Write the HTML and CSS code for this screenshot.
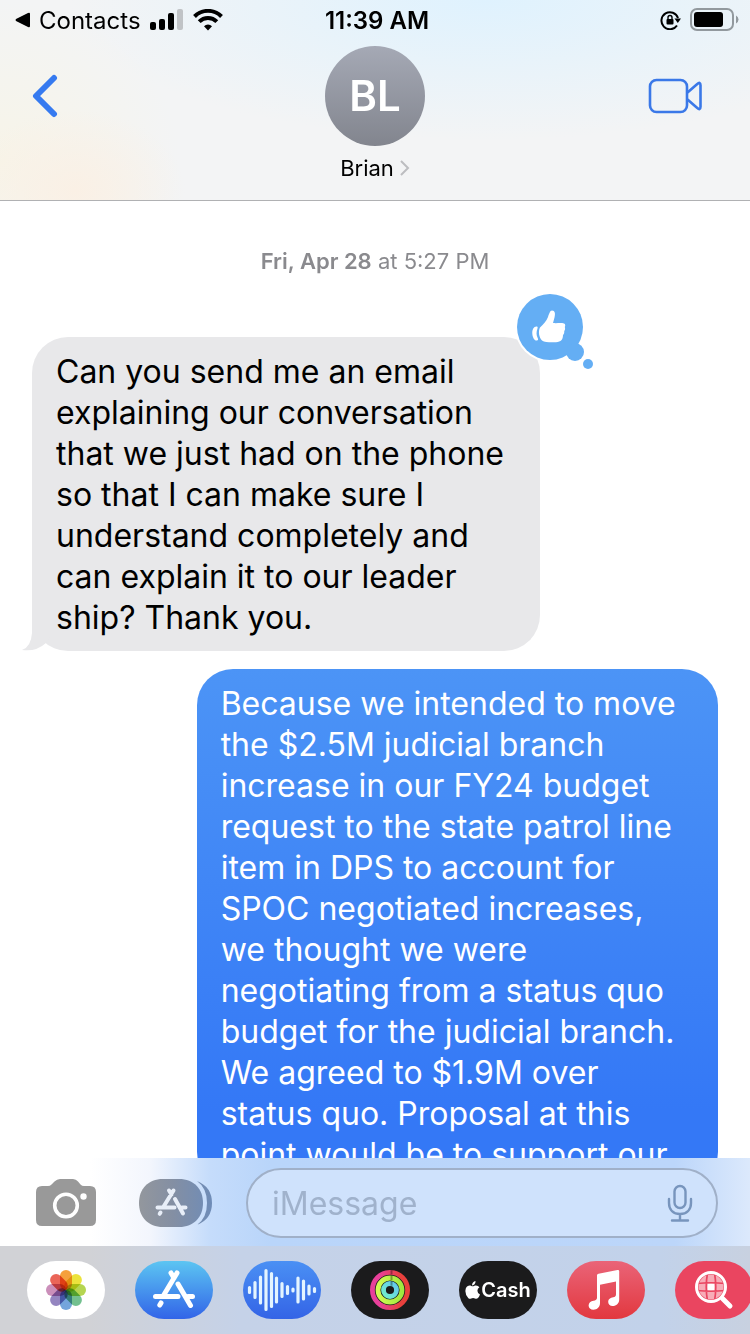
FILE: index.html
```html
<!DOCTYPE html>
<html lang="en">

<head>
  <meta charset="UTF-8">
  <meta name="viewport" content="width=device-width, initial-scale=1.0">
  <title>Messages</title>
  <link rel="stylesheet" href="styles.css">
</head>

<body>
  <header class="header">
    <div class="status">
      <div class="status-left">
        <a class="back-app" href="#contacts">
          <svg width="15" height="16" viewBox="0 0 15 16"><path d="M1 7 13 1q2-1 2 1v12q0 2-2 1L1 9q-1-1 0-2z"/></svg>
          Contacts
        </a>
        <svg width="34" height="22" viewBox="0 0 34 22">
          <rect x="0" y="13" width="6" height="8" rx="2"/>
          <rect x="9" y="10" width="6" height="11" rx="2"/>
          <rect x="18" y="4" width="6" height="17" rx="2"/>
          <rect x="27" y="0" width="6" height="21" rx="2" fill="#c0c3c6"/>
        </svg>
        <svg width="30" height="22" viewBox="0 0 30 22" fill="none" stroke="#000" stroke-width="4">
          <path d="M1.500 7.500a19 19 0 0 1 27 0"/>
          <path d="M6.200 12.600a12.400 12.400 0 0 1 17.600 0"/>
          <path d="M15 21.500l-4-4.300a5.800 5.800 0 0 1 8 0z" fill="#000" stroke="none"/>
        </svg>
      </div>
      <time class="status-time">11:39 AM</time>
      <div class="status-right">
        <svg width="22" height="20" viewBox="0 0 22 20" fill="none" stroke="#000" stroke-width="2">
          <path d="M17 15.500A8.500 8.500 0 1 1 18 8"/>
          <path d="M14.500 8.500H21l-3.200 4.500z" fill="#000" stroke="none"/>
          <rect x="6.500" y="9" width="7" height="5.500" rx="1" fill="#000" stroke="none"/>
          <path d="M8 9.500V7.500a2 2 0 0 1 4 0v2" stroke-width="1.400"/>
        </svg>
        <svg width="49" height="24" viewBox="0 0 49 24">
          <rect x="1" y="1" width="42" height="21" rx="6" fill="none" stroke="#92999e" stroke-width="2"/>
          <rect x="4" y="4" width="29" height="15" rx="3"/>
          <path d="M46 7.500q2.500 1.500 2.500 4t-2.500 4z" fill="#92999e"/>
        </svg>
      </div>
    </div>
    <nav class="nav">
      <button class="nav-btn" type="button" aria-label="Back">
        <svg width="26" height="44" viewBox="0 0 26 44" fill="none" stroke="#367af0" stroke-width="6" stroke-linecap="round" stroke-linejoin="round"><path d="M22 4 4 22l18 18"/></svg>
      </button>
      <a class="contact" href="#brian">
        <span class="avatar">BL</span>
        <span class="contact-name">Brian
          <svg width="10" height="16" viewBox="0 0 10 16" fill="none" stroke="#bcbdc0" stroke-width="2"><path d="m1 1 7 7-7 7"/></svg>
        </span>
      </a>
      <button class="nav-btn nav-video" type="button" aria-label="FaceTime">
        <svg width="54" height="36" viewBox="0 0 54 36" fill="none" stroke="#3a78e8" stroke-width="2.600" stroke-linejoin="round">
          <rect x="2" y="2" width="37" height="32" rx="6.500"/>
          <path d="M39.500 14.500 49 6.200q3.500-3 3.500 1v21.600q0 4-3.500 1l-9.500-8.300"/>
        </svg>
      </button>
    </nav>
  </header>

  <main class="messages">
    <p class="date"><strong>Fri, Apr 28</strong> at 5:27 PM</p>
    <div class="bubble received">
      Can you send me an email explaining our conversation that we just had on the phone so that I can make sure I understand completely and can explain it to our leader ship? Thank you.
      <svg class="tail" width="28" height="40" viewBox="0 0 28 40"><path d="M10 0v22Q9 36 0 39q14 2 24-7l4-6V0z" fill="#e8e8ea"/></svg>
      <svg class="reaction" width="80" height="80" viewBox="0 0 80 80" role="img" aria-label="Liked">
        <circle cx="35" cy="35" r="35" fill="#fff"/>
        <g fill="#64aef4">
          <circle cx="35" cy="35" r="33"/>
          <circle cx="60" cy="60" r="9"/>
          <circle cx="73" cy="72" r="5"/>
        </g>
        <path d="M25 35.500c3-2.500 6.500-6.500 8-10.500 1-3 2-6.500 4-6.500 3 0 3.500 3 2.500 7l-1.500 5.500c4 .5 8-.5 11 .5 1.500.5 1.500 2 .8 3.500.5 1.500.4 3-.6 4 .3 1.500-.2 3-1.200 4 0 4.500-2 7-7 7.200-5 .4-11 .2-14-1.700-3-3-4-9-2-13z" fill="#fff"/>
        <path d="M22 34.500c-3-.5-5 3-4.700 7 .2 4 2.200 7.500 4.700 7 1-.3 1.500-1 .7-2.500-1.500-3-1.500-6-.2-9.500.3-1 .2-1.800-.5-2z" fill="#fff"/>
      </svg>
    </div>
    <div class="bubble sent">
      Because we intended to move the $2.5M judicial branch increase in our FY24 budget request to the state patrol line item in DPS to account for SPOC negotiated increases, we thought we were negotiating from a status quo budget for the judicial branch. We agreed to $1.9M over status quo. Proposal at this point would be to support our
    </div>
  </main>

  <form class="composer">
    <button class="icon-btn" type="button" aria-label="Camera">
      <svg width="60" height="48" viewBox="0 0 60 48">
        <path d="M6 7h6q2 0 3.500-1.500l3-3Q21 0 24 0h13q3 0 5 2.500l2.500 3Q46 7 48 7h6q6 0 6 6v28q0 6-6 6H6q-6 0-6-6V13q0-6 6-6z" fill="#999"/>
        <circle cx="30" cy="26.500" r="11.300" fill="none" stroke="#fff" stroke-width="3.600"/>
        <circle cx="47.500" cy="17.500" r="3.200" fill="#fff"/>
      </svg>
    </button>
    <button class="icon-btn" type="button" aria-label="Apps">
      <svg width="74" height="48" viewBox="0 0 74 48">
        <defs>
          <linearGradient id="drawer" gradientUnits="userSpaceOnUse" x1="0" y1="0" x2="74" y2="0"><stop offset="0" stop-color="#93979d"/><stop offset=".45" stop-color="#848fa3"/><stop offset="1" stop-color="#6e8cb8"/></linearGradient>
        </defs>
        <path d="M24 0h16c15 0 24 10 24 24s-9 24-24 24H24C9 48 0 38 0 24S9 0 24 0z" fill="url(#drawer)"/>
        <path d="M58 2q15 6 15 22T58 46q10-7 10-22T58 2z" fill="url(#drawer)"/>
        <g fill="none" stroke="#e8eef8" stroke-width="4" stroke-linecap="round">
          <path d="M34.500 11.500 24 28.500M30 11.500l2.500 4M36 20l8 14.500M18.500 28.500h17M43 28.500h3.500M21.500 33.500l-.8 1.300"/>
        </g>
      </svg>
    </button>
    <div class="field">
      <input class="field-input" type="text" placeholder="iMessage" aria-label="iMessage">
      <button class="icon-btn" type="button" aria-label="Dictate">
        <svg width="26" height="38" viewBox="0 0 26 38" fill="none" stroke="#7895bd" stroke-width="2.400" stroke-linecap="round">
          <rect x="7.500" y="2" width="11" height="22" rx="5.500"/>
          <path d="M2 15v4c0 7 4.500 11 11 11s11-4 11-11v-4M13 30v6M5 36.500h16"/>
        </svg>
      </button>
    </div>
  </form>

  <nav class="apps">
    <a class="app app-photos" href="#photos" aria-label="Photos">
      <svg width="78" height="58" viewBox="0 0 78 58">
        <g class="petals" transform="translate(39 29)">
          <rect x="-6" y="-20" width="12" height="20" rx="6" fill="#f5a03c"/>
          <rect x="-6" y="-20" width="12" height="20" rx="6" fill="#ece33c" transform="rotate(45)"/>
          <rect x="-6" y="-20" width="12" height="20" rx="6" fill="#b5d551" transform="rotate(90)"/>
          <rect x="-6" y="-20" width="12" height="20" rx="6" fill="#73c08f" transform="rotate(135)"/>
          <rect x="-6" y="-20" width="12" height="20" rx="6" fill="#74a5dc" transform="rotate(180)"/>
          <rect x="-6" y="-20" width="12" height="20" rx="6" fill="#9485c0" transform="rotate(225)"/>
          <rect x="-6" y="-20" width="12" height="20" rx="6" fill="#cb8fba" transform="rotate(270)"/>
          <rect x="-6" y="-20" width="12" height="20" rx="6" fill="#ea6558" transform="rotate(315)"/>
        </g>
      </svg>
    </a>
    <a class="app app-store" href="#store" aria-label="App Store">
      <svg width="78" height="58" viewBox="0 0 78 58" fill="none" stroke="#fff" stroke-width="5" stroke-linecap="round">
        <path d="M42 12 28.500 34.500M36 12l3 5M43 23l12.500 21.500M20.500 35.500H43M53 35.500h4.500M26 42l-1.200 2"/>
      </svg>
    </a>
    <a class="app app-audio" href="#audio" aria-label="Audio">
      <svg width="78" height="58" viewBox="0 0 78 58" fill="none" stroke="#e3f4ff" stroke-width="3.200" stroke-linecap="round">
        <path d="M6.500 26.500v5M12 21.500v15M17.500 16v26M23 9.500v39M28.500 12.500v33M33.500 17v24M39 22.500v13M44.500 25.500v7M50 28v2M55 17v24M60.500 20v18M66 25v8M71.500 27.500v3"/>
      </svg>
    </a>
    <a class="app app-dark" href="#fitness" aria-label="Fitness">
      <svg width="78" height="58" viewBox="0 0 78 58" fill="none" stroke-width="4.800">
        <defs>
          <linearGradient id="move" x1="0" y1="0" x2="1" y2="0"><stop offset=".2" stop-color="#e8409a"/><stop offset=".8" stop-color="#e8403c"/></linearGradient>
          <linearGradient id="exercise" x1="0" y1="0" x2="1" y2="0"><stop offset="0" stop-color="#d3fb52"/><stop offset="1" stop-color="#9fe83f"/></linearGradient>
          <linearGradient id="stand" x1="0" y1="1" x2="1" y2="0"><stop offset="0" stop-color="#72efcb"/><stop offset="1" stop-color="#62c8ee"/></linearGradient>
        </defs>
        <circle cx="39" cy="29" r="17.600" stroke="url(#move)"/>
        <circle cx="39" cy="29" r="12" stroke="url(#exercise)"/>
        <circle cx="39" cy="29" r="6.500" stroke="url(#stand)"/>
        <path d="M40.500 9.200v4.400M40.500 14.800v4.400M40.500 20.300v4.400" stroke="#000" stroke-opacity=".35" stroke-width="2"/>
      </svg>
    </a>
    <a class="app app-dark app-cash" href="#cash">
      <svg width="15" height="18" viewBox="0 0 15 18" fill="#fff">
        <path d="M10.500 0q.2 2-1 3.300Q8.500 4.500 7 4.400 7 2.600 8 1.400 9 .2 10.500 0z"/>
        <path d="M7.700 5.300C8.500 5.300 9.500 4.500 11 4.500q2.200.1 3.400 1.800-2 1.200-2 3.500 0 2.700 2.600 3.700-.8 2.200-2 3.500-1.300 1.300-3 .5-2-.8-3.800 0-1.800.8-3-.6Q.2 13.400.4 9.700.7 5 4.500 4.500c1.500 0 2.400.8 3.200.8z"/>
      </svg>
      Cash
    </a>
    <a class="app app-music" href="#music" aria-label="Music">
      <svg width="78" height="58" viewBox="0 0 78 58" fill="#fff">
        <path d="M30 14.500q0-1.500 1.500-1.800l19-3.700q1.700-.3 1.700 1.200V38.500c0 4-3 6.500-6.500 6.500-3 0-4.500-2-4.500-4 0-3 2.300-4.200 5-4.800 2-.4 2.800-1 2.800-3V20.500L33 23.700V42c0 4-3 6.700-6.500 6.700-3 0-4.900-1.800-4.900-4.200 0-2.700 2-4.200 5-4.800 2-.4 3.400-1 3.400-3z"/>
      </svg>
    </a>
    <a class="app app-search" href="#images" aria-label="Images">
      <svg width="78" height="58" viewBox="0 0 78 58" fill="none" stroke="#fff">
        <circle cx="36" cy="26" r="12.500" fill="#f7adb8" stroke="none"/>
        <rect x="32.500" y="22.500" width="7" height="7" fill="#fff" stroke="none"/>
        <path d="M32.500 12q-2.500 14 0 28M39.500 12q2.500 14 0 28M22 22.500q14-1.500 28 0M22 29.500q14 1.500 28 0" stroke="#ea4560" stroke-width="1.700"/>
        <circle cx="36" cy="26" r="14.500" stroke-width="3"/>
        <path d="m47.500 37.500 7.500 7.500" stroke-width="5" stroke-linecap="round"/>
      </svg>
    </a>
  </nav>
</body>

</html>
```
FILE: styles.css
```css
* {
  box-sizing: border-box;
}

body {
  display: flex;
  flex-direction: column;
  height: 100vh;
  margin: 0;
  overflow: hidden;
  font-family: Inter, "Liberation Sans", sans-serif;
  color: #000;
  background: #fff;
}

a {
  color: inherit;
  text-decoration: none;
}

button {
  display: flex;
  padding: 0;
  border: 0;
  background: none;
  cursor: pointer;
}

svg {
  display: block;
  flex-shrink: 0;
}

/* header */
.header {
  flex-shrink: 0;
  border-bottom: 1px solid #b0b1b3;
  background:
    radial-gradient(ellipse 110px 80px at 10% 95%, #faf0e5, transparent),
    radial-gradient(ellipse 180px 160px at 0 80%, #f7f4e8, transparent),
    radial-gradient(ellipse 420px 140px at 65% 0, #dff2fe, transparent),
    #f3f4f5;
}

.status {
  display: grid;
  grid-template-columns: 1fr auto 1fr;
  align-items: center;
  height: 40px;
  padding: 0 11px 0 15px;
  font-size: 24px;
}

.status-left,
.back-app {
  display: flex;
  align-items: center;
  gap: 9px;
}

.status-right {
  display: flex;
  align-items: center;
  justify-content: flex-end;
  gap: 8px;
}

.status-time {
  font-weight: 600;
}

.nav {
  display: grid;
  grid-template-columns: 1fr auto 1fr;
  height: 160px;
  padding: 6px 32px 0;
}

.nav-btn {
  align-items: center;
  height: 100px;
}

.nav-video {
  justify-self: end;
  padding-right: 16px;
}

.contact {
  display: flex;
  flex-direction: column;
  align-items: center;
  gap: 8px;
}

.avatar {
  display: flex;
  align-items: center;
  justify-content: center;
  width: 100px;
  height: 100px;
  border-radius: 50%;
  font-size: 42px;
  font-weight: 600;
  line-height: 44px;
  color: #fff;
  background: linear-gradient(#a5a9b5, #82858e);
}

.contact-name {
  display: flex;
  align-items: center;
  gap: 6px;
  font-size: 22px;
  line-height: 28px;
}

/* conversation */
.messages {
  display: flex;
  flex: 1;
  flex-direction: column;
  min-height: 0;
  padding: 45px 32px 0;
  overflow: hidden;
}

.date {
  margin: 0 0 61px;
  font-size: 22px;
  line-height: 30px;
  text-align: center;
  color: #8a8a8e;
}

.date strong {
  font-weight: 600;
}

.bubble {
  position: relative;
  flex-shrink: 0;
  padding: 14px 24px 13px;
  border-radius: 36px;
  font-size: 32px;
  line-height: 41px;
}

.received {
  align-self: flex-start;
  max-width: 74%;
  background: #e8e8ea;
}

.sent {
  align-self: flex-end;
  max-width: 76%;
  margin-top: 18px;
  color: #fff;
  background: linear-gradient(#4c94f6, #3478f6 440px);
}

.tail {
  position: absolute;
  bottom: 0;
  left: -10px;
}

.reaction {
  position: absolute;
  top: -45px;
  right: -55px;
}

/* composer */
.composer {
  display: flex;
  flex-shrink: 0;
  align-items: center;
  height: 88px;
  padding: 2px 32px 0 36px;
  background: linear-gradient(90deg, #fff 12%, #f3f6fd 20%, #c5dcfb 28%, #b9d5fa 36%, #bcd6fa 90%, #dce9fc);
}

.icon-btn + .icon-btn {
  margin: 0 33px 0 43px;
}

.field {
  display: flex;
  flex: 1;
  align-items: center;
  min-width: 0;
  height: 70px;
  padding: 0 23px 0 24px;
  border: 2px solid #a0b0c8;
  border-radius: 35px;
  background: #cfe2fc;
}

.field-input {
  flex: 1;
  min-width: 0;
  padding: 0;
  border: 0;
  outline: 0;
  font: inherit;
  font-size: 32px;
  background: none;
}

.field-input::placeholder {
  color: #a0b2cc;
  opacity: 1;
}

/* app strip */
.apps {
  display: flex;
  flex-shrink: 0;
  align-items: center;
  gap: 30px;
  height: 88px;
  padding: 0 27px;
  overflow: hidden;
  background: linear-gradient(90deg, #d1d2d6 12%, #c5d2e8 32%, #c2d2ea 88%, #c8d1e0);
}

.app {
  display: flex;
  flex-shrink: 0;
  align-items: center;
  justify-content: center;
  width: 78px;
  height: 58px;
  border-radius: 29px;
}

.app-photos {
  background: #fff;
}

.petals rect {
  mix-blend-mode: multiply;
}

.app-store {
  background: linear-gradient(#5cc5f2, #3264e8);
}

.app-audio {
  background: linear-gradient(#4a90f4, #3464e6);
}

.app-dark {
  background: #1b1b1c;
}

.app-cash {
  gap: 1px;
  font-size: 20px;
  font-weight: 600;
  color: #fff;
}

.app-music {
  background: linear-gradient(#ea6478, #e2383f);
}

.app-search {
  background: #ea4560;
}
```
